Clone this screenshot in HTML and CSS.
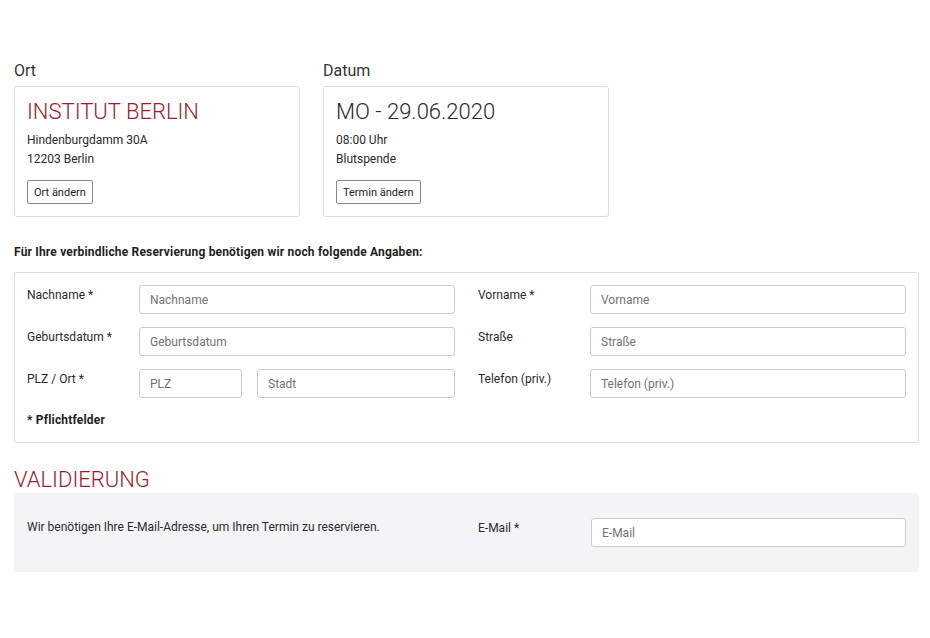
FILE: index.html
```html
<!DOCTYPE html>
<html lang="de">
<head>
<meta charset="utf-8">
<title>Reservierung</title>
<link rel="stylesheet" href="styles.css">
</head>
<body>
<main class="page">
  <section class="summary">
    <div class="summary-col">
      <div class="summary-label">Ort</div>
      <div class="card">
        <div class="card-title red">INSTITUT BERLIN</div>
        <div class="card-lines">
          <div>Hindenburgdamm 30A</div>
          <div>12203 Berlin</div>
        </div>
        <button class="btn" type="button">Ort ändern</button>
      </div>
    </div>
    <div class="summary-col">
      <div class="summary-label">Datum</div>
      <div class="card">
        <div class="card-title">MO - 29.06.2020</div>
        <div class="card-lines">
          <div>08:00 Uhr</div>
          <div>Blutspende</div>
        </div>
        <button class="btn" type="button">Termin ändern</button>
      </div>
    </div>
  </section>

  <p class="intro">Für Ihre verbindliche Reservierung benötigen wir noch folgende Angaben:</p>

  <section class="form-box">
    <div class="form-grid">
      <div class="form-col">
        <div class="row">
          <label class="lbl">Nachname *</label>
          <div class="fields"><input class="inp" placeholder="Nachname"></div>
        </div>
        <div class="row">
          <label class="lbl">Geburtsdatum *</label>
          <div class="fields"><input class="inp" placeholder="Geburtsdatum"></div>
        </div>
        <div class="row">
          <label class="lbl">PLZ / Ort *</label>
          <div class="fields split">
            <input class="inp plz" placeholder="PLZ">
            <input class="inp" placeholder="Stadt">
          </div>
        </div>
      </div>
      <div class="form-col">
        <div class="row">
          <label class="lbl">Vorname *</label>
          <div class="fields"><input class="inp" placeholder="Vorname"></div>
        </div>
        <div class="row">
          <label class="lbl">Straße</label>
          <div class="fields"><input class="inp" placeholder="Straße"></div>
        </div>
        <div class="row">
          <label class="lbl">Telefon (priv.)</label>
          <div class="fields"><input class="inp" placeholder="Telefon (priv.)"></div>
        </div>
      </div>
    </div>
    <p class="required">* Pflichtfelder</p>
  </section>

  <h2 class="section-title red">VALIDIERUNG</h2>
  <section class="valid-box">
    <div class="form-grid">
      <div class="form-col">
        <p class="valid-text">Wir benötigen Ihre E-Mail-Adresse, um Ihren Termin zu reservieren.</p>
      </div>
      <div class="form-col">
        <div class="row">
          <label class="lbl">E-Mail *</label>
          <div class="fields"><input class="inp" placeholder="E-Mail"></div>
        </div>
      </div>
    </div>
  </section>
</main>
</body>
</html>
```

FILE: styles.css
```css
* { box-sizing: border-box; }

html, body {
  margin: 0;
  padding: 0;
  background: #ffffff;
}

body {
  font-family: Roboto, "Liberation Sans", Arial, sans-serif;
  color: #2a2a2a;
  font-size: 12px;
  line-height: 18px;
}

.page {
  width: 905px;
  margin-left: 14px;
  padding-top: 60px;
}

.red { color: #9c1c2b; }

.summary {
  display: flex;
  gap: 23px;
}

.summary-col {
  width: 286px;
}

.summary-label {
  font-size: 16px;
  line-height: 22px;
  color: #333333;
  margin-bottom: 4px;
}

.card {
  border: 1px solid #dddddd;
  border-radius: 3px;
  padding: 12px 12px 12px;
}

.card-title {
  font-size: 22px;
  line-height: 26px;
  font-weight: 300;
}

.card-lines {
  margin-top: 6px;
  font-size: 12px;
  line-height: 19px;
}

.btn {
  display: block;
  margin-top: 11px;
  height: 24px;
  padding: 0 6px;
  font-family: inherit;
  font-size: 11px;
  color: #222222;
  background: #ffffff;
  border: 1px solid #888888;
  border-radius: 2px;
}

.intro {
  margin: 26px 0 11px;
  font-weight: 700;
  font-size: 12px;
  line-height: 18px;
  letter-spacing: 0.18px;
  color: #1e1e1e;
}

.form-box {
  border: 1px solid #dddddd;
  border-radius: 2px;
  padding: 12px 12px 13px;
}

.form-grid {
  display: grid;
  grid-template-columns: 428px 428px;
  column-gap: 23px;
}

.form-col {
  display: flex;
  flex-direction: column;
  gap: 13px;
}

.row {
  display: flex;
  align-items: flex-start;
}

.lbl {
  width: 112px;
  flex: none;
  padding-top: 1px;
  line-height: 18px;
}

.fields {
  flex: 1;
  display: flex;
}

.fields.split {
  gap: 15px;
}

.inp {
  flex: 1;
  min-width: 0;
  height: 29px;
  padding: 0 10px;
  border: 1px solid #cccccc;
  border-radius: 3px;
  font-family: inherit;
  font-size: 12px;
  color: #222222;
  background: #ffffff;
}

.inp::placeholder {
  color: #737373;
  opacity: 1;
}

.inp.plz {
  flex: none;
  width: 103px;
}

.required {
  margin: 13px 0 0;
  font-weight: 700;
  line-height: 18px;
  letter-spacing: 0.18px;
  color: #1e1e1e;
}

.section-title {
  margin: 24px 0 0;
  font-size: 22px;
  line-height: 26px;
  font-weight: 300;
}

.valid-box {
  background: #f4f4f6;
  border-radius: 3px;
  padding: 25px 11px 25px 13px;
}

.valid-box .lbl {
  width: 113px;
}

.valid-text {
  margin: 0;
  line-height: 18px;
}
```
